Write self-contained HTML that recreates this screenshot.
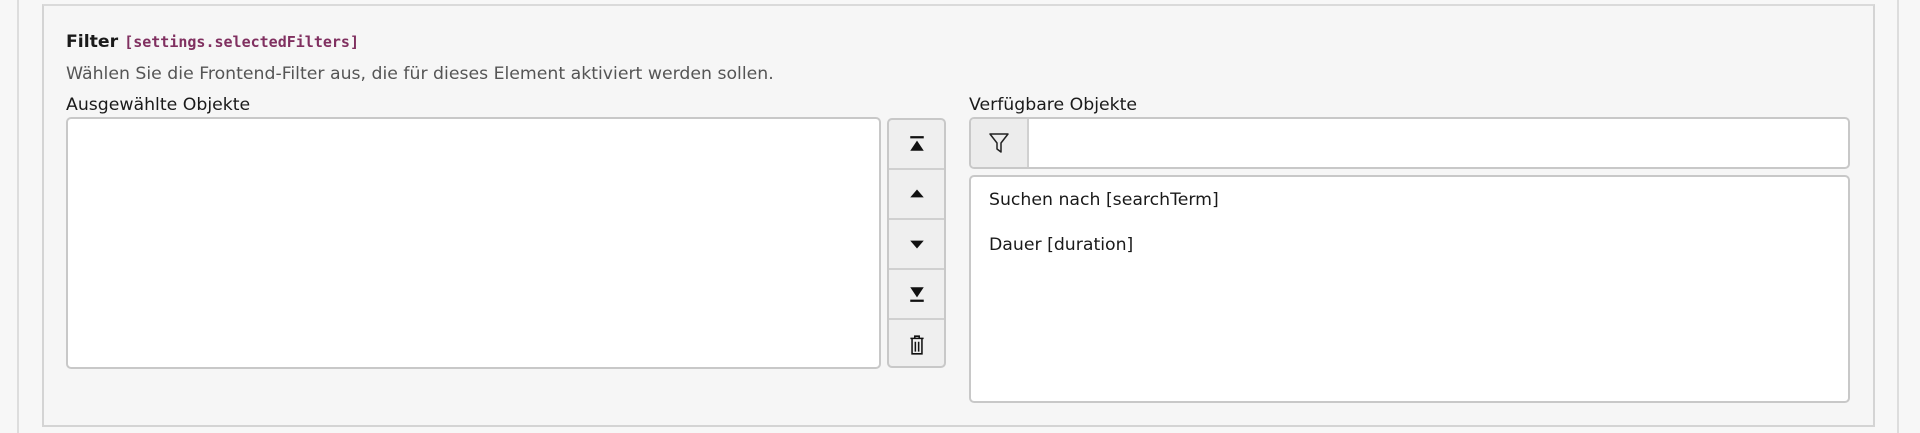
<!DOCTYPE html>
<html><head><meta charset="utf-8"><style>
*{box-sizing:border-box;margin:0;padding:0}
body{width:1920px;height:433px;background:#f7f7f7;font-family:"DejaVu Sans",sans-serif;color:#1a1a1a;position:relative;overflow:hidden}
.outer{position:absolute;left:17px;top:0;width:1882px;height:433px;border-left:2px solid #ddd;border-right:2px solid #ddd}
.panel{position:absolute;left:42px;top:4px;width:1833px;height:423px;border:2px solid #d4d4d4;border-top-color:#dadada;background:#f6f6f6}
.t{position:absolute;font-size:17.3px;white-space:nowrap}
.box{position:absolute;background:#fff;border:2px solid #c8c8c8;border-radius:5px}
.btns{position:absolute;left:887px;top:118px;width:59px;height:250px;border:2px solid #c8c8c8;border-radius:5px;background:#efefef;overflow:hidden}
.btns div{height:50px;border-bottom:2px solid #d0d0d0;display:flex;align-items:center;justify-content:center}
.btns div:last-child{border-bottom:none}
</style></head><body>
<div class="outer"></div>
<div class="panel"></div>
<div class="t" style="left:66px;top:32px;font-weight:bold">Filter <span style="font-family:'DejaVu Sans Mono','Liberation Mono',monospace;font-weight:bold;color:#803060;font-size:15px">[settings.selectedFilters]</span></div>
<div class="t" style="left:66px;top:64px;color:#555">Wählen Sie die Frontend-Filter aus, die für dieses Element aktiviert werden sollen.</div>
<div class="t" style="left:66px;top:95px">Ausgewählte Objekte</div>
<div class="box" style="left:66px;top:117px;width:815px;height:252px"></div>
<div class="btns">
<div><svg width="18" height="18" viewBox="0 0 16 16"><rect x="2" y="1" width="12" height="2" fill="#111"/><path d="M8 5L14 14H2Z" fill="#111"/></svg></div>
<div><svg width="18" height="18" viewBox="0 0 16 16"><path d="M8 4L14 11H2Z" fill="#111"/></svg></div>
<div><svg width="18" height="18" viewBox="0 0 16 16"><path d="M8 12L14 5H2Z" fill="#111"/></svg></div>
<div><svg width="18" height="18" viewBox="0 0 16 16"><path d="M8 11L14 2H2Z" fill="#111"/><rect x="2" y="13" width="12" height="2" fill="#111"/></svg></div>
<div><svg width="18" height="22" viewBox="0 0 16 20"><path d="M2 4H14M6 4V2H10V4M3.5 4V18H12.5V4M6.5 7V16M9.5 7V16" stroke="#111" stroke-width="1.4" fill="none"/></svg></div>
</div>
<div class="t" style="left:969px;top:95px">Verfügbare Objekte</div>
<div class="box" style="left:969px;top:117px;width:881px;height:52px;overflow:hidden"><div style="position:absolute;left:0;top:0;width:58px;height:48px;background:#ececec;border-right:2px solid #d0d0d0;display:flex;align-items:center;justify-content:center"><svg width="22" height="24" viewBox="0 0 22 24"><path d="M2 3H20L13 12V21L9 18V12Z" stroke="#222" stroke-width="1.5" fill="none" stroke-linejoin="round"/></svg></div></div>
<div class="box" style="left:969px;top:175px;width:881px;height:228px"></div>
<div class="t" style="left:989px;top:190px">Suchen nach [searchTerm]</div>
<div class="t" style="left:989px;top:235px">Dauer [duration]</div>
</body></html>
